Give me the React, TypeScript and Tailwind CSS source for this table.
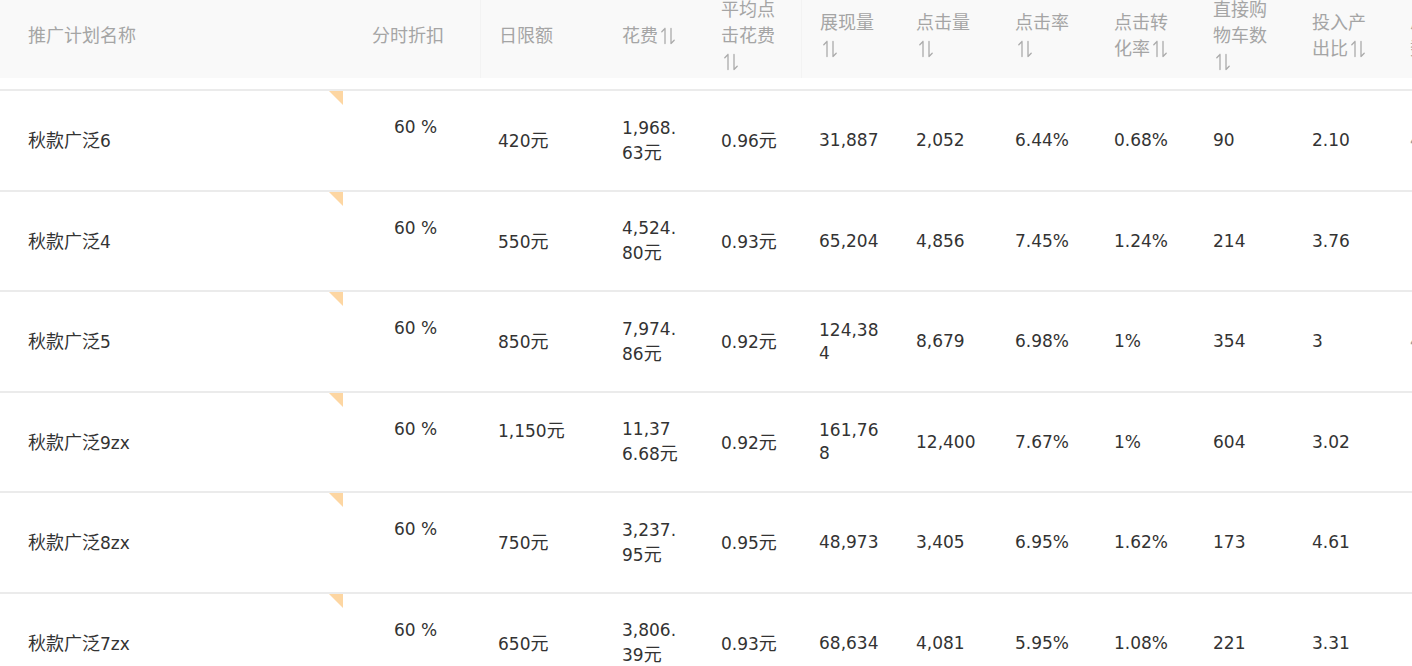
import React from "react";

type Row = {
  name: string;
  budget: string[];
  cost: string[];
  cpc: string;
  imp: string[];
  clicks: string;
  ctr: string;
  cvr: string;
  cart: string;
  roi: string;
  extra: string;
};

const rows: Row[] = [
  { name: "秋款广泛6", budget: ["420元"], cost: ["1,968.", "63元"], cpc: "0.96元", imp: ["31,887"], clicks: "2,052", ctr: "6.44%", cvr: "0.68%", cart: "90", roi: "2.10", extra: "4" },
  { name: "秋款广泛4", budget: ["550元"], cost: ["4,524.", "80元"], cpc: "0.93元", imp: ["65,204"], clicks: "4,856", ctr: "7.45%", cvr: "1.24%", cart: "214", roi: "3.76", extra: "" },
  { name: "秋款广泛5", budget: ["850元"], cost: ["7,974.", "86元"], cpc: "0.92元", imp: ["124,38", "4"], clicks: "8,679", ctr: "6.98%", cvr: "1%", cart: "354", roi: "3", extra: "4" },
  { name: "秋款广泛9zx", budget: ["1,150元", "\u00a0"], cost: ["11,37", "6.68元"], cpc: "0.92元", imp: ["161,76", "8"], clicks: "12,400", ctr: "7.67%", cvr: "1%", cart: "604", roi: "3.02", extra: "" },
  { name: "秋款广泛8zx", budget: ["750元"], cost: ["3,237.", "95元"], cpc: "0.95元", imp: ["48,973"], clicks: "3,405", ctr: "6.95%", cvr: "1.62%", cart: "173", roi: "4.61", extra: "" },
  { name: "秋款广泛7zx", budget: ["650元"], cost: ["3,806.", "39元"], cpc: "0.93元", imp: ["68,634"], clicks: "4,081", ctr: "5.95%", cvr: "1.08%", cart: "221", roi: "3.31", extra: "" },
];

function Mixed({ text }: { text: string }) {
  const parts = text.split(/([\u4e00-\u9fff]+)/);
  return (
    <>
      {parts.map((p, i) =>
        /[\u4e00-\u9fff]/.test(p) ? (
          <span key={i} className="text-[18px] font-['Noto_Sans_CJK_SC',sans-serif]">
            {p}
          </span>
        ) : (
          <span key={i}>{p}</span>
        )
      )}
    </>
  );
}

function SortIcon() {
  return (
    <svg
      width="17"
      height="18"
      viewBox="0 0 17 18"
      className="inline-block align-[-3px] ml-[2px]"
      fill="none"
      stroke="#ababab"
      strokeWidth="1.3"
      strokeLinecap="round"
    >
      <path d="M5 1.5 V16.5 M5 1.5 L1.8 4.8" />
      <path d="M11 1.5 V16.5 M11 16.5 L14.2 13.2" />
    </svg>
  );
}

function Head({ lines, icon, cls }: { lines: string[]; icon?: boolean; cls: string }) {
  return (
    <div className={`${cls} shrink-0 flex items-center h-full pb-[10px]`}>
      <div className="leading-[26px]">
        {lines.map((l, i) => (
          <div key={i} className="whitespace-nowrap">
            {l}
            {icon && i === lines.length - 1 ? <SortIcon /> : null}
          </div>
        ))}
      </div>
    </div>
  );
}

function Cell({ lines, cls }: { lines: string[]; cls: string }) {
  return (
    <div className={`${cls} shrink-0 flex items-center h-full`}>
      <div className="leading-[23px]">
        {lines.map((l, i) => (
          <div key={i} className="whitespace-nowrap">
            <Mixed text={l} />
          </div>
        ))}
      </div>
    </div>
  );
}

export default function App() {
  return (
    <div className="w-[1412px] h-[666px] overflow-hidden bg-white">
      <div className="w-[1600px]">
        {/* header */}
        <div className="flex h-[78px] bg-[#f9f9f9] text-[18px] text-[#a5a5a5] font-['Noto_Sans_CJK_SC',sans-serif]">
          <Head cls="w-[343px] pl-[28px]" lines={["推广计划名称"]} />
          <Head cls="w-[137px] pl-[29px]" lines={["分时折扣"]} />
          <Head cls="w-[124px] pl-[18px] border-l border-[#f3f3f3]" lines={["日限额"]} />
          <Head cls="w-[99px] pl-[18px]" lines={["花费"]} icon />
          <Head cls="w-[98px] pl-[18px]" lines={["平均点", "击花费", ""]} icon />
          <Head cls="w-[97px] pl-[18px] border-l border-[#f3f3f3]" lines={["展现量", ""]} icon />
          <Head cls="w-[99px] pl-[18px]" lines={["点击量", ""]} icon />
          <Head cls="w-[99px] pl-[18px]" lines={["点击率", ""]} icon />
          <Head cls="w-[99px] pl-[18px]" lines={["点击转", "化率"]} icon />
          <Head cls="w-[99px] pl-[18px]" lines={["直接购", "物车数", ""]} icon />
          <Head cls="w-[99px] pl-[18px]" lines={["投入产", "出比"]} icon />
          <Head cls="w-[99px] pl-[17px]" lines={["总收藏", "数"]} icon />
        </div>
        <div className="h-[11px]" />
        {/* rows */}
        <div className="text-[17px] text-[#333333] font-['DejaVu_Sans','Noto_Sans_CJK_SC',sans-serif]">
          {rows.map((r, i) => (
            <div
              key={i}
              className={`${i % 2 === 0 ? "h-[101px]" : "h-[100px]"} flex border-t-2 border-[#ebebeb]`}
            >
              <div className="relative w-[343px] shrink-0 h-full flex items-center pl-[28px]">
                <span className="leading-[23px]">
                  <Mixed text={r.name} />
                </span>
                <div className="absolute top-0 right-0 w-0 h-0 border-l-[14px] border-l-transparent border-t-[14px] border-t-[#fdd6a2]" />
              </div>
              <div className="w-[137px] shrink-0 h-full pl-[51px] pt-[25px] leading-[23px]">60 %</div>
              <Cell cls="w-[124px] pl-[18px]" lines={r.budget} />
              <Cell cls="w-[99px] pl-[18px]" lines={r.cost} />
              <Cell cls="w-[98px] pl-[18px]" lines={[r.cpc]} />
              <Cell cls="w-[97px] pl-[18px]" lines={r.imp} />
              <Cell cls="w-[99px] pl-[18px]" lines={[r.clicks]} />
              <Cell cls="w-[99px] pl-[18px]" lines={[r.ctr]} />
              <Cell cls="w-[99px] pl-[18px]" lines={[r.cvr]} />
              <Cell cls="w-[99px] pl-[18px]" lines={[r.cart]} />
              <Cell cls="w-[99px] pl-[18px]" lines={[r.roi]} />
              <Cell cls="w-[99px] pl-[17px] text-[#999999]" lines={[r.extra || "\u00a0"]} />
            </div>
          ))}
        </div>
      </div>
    </div>
  );
}
